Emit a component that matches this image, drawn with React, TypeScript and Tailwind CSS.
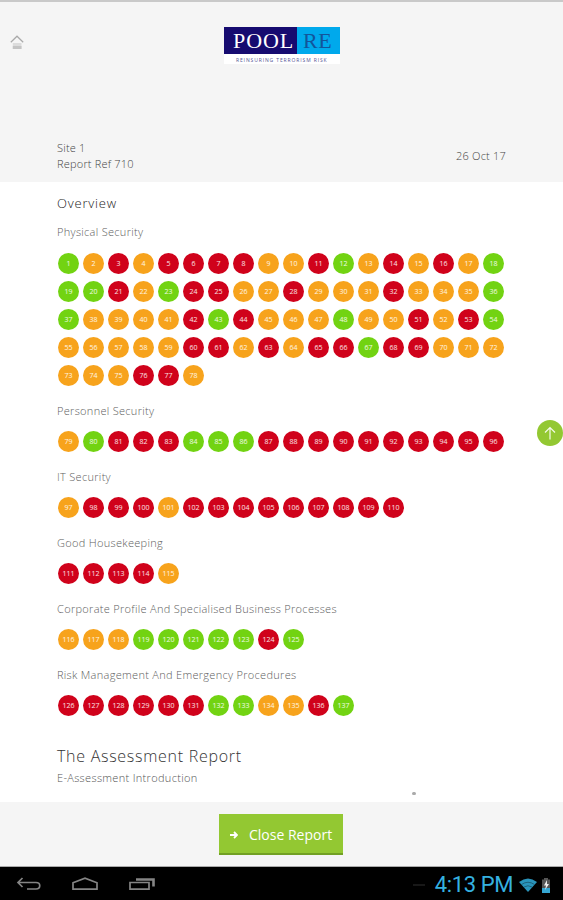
import React from "react";

type Section = { title: string; start: number; ratings: string };

const sections: Section[] = [
  {
    title: "Physical Security",
    start: 1,
    ratings:
      "gororrrroorgororog" +
      "ggrogrroorooorooog" +
      "goooorgrooogoororg" +
      "ooooorrororrgrrooo" +
      "ooorro",
  },
  { title: "Personnel Security", start: 79, ratings: "ogrrrgggrrrrrrrrrr" },
  { title: "IT Security", start: 97, ratings: "orrrorrrrrrrrr" },
  { title: "Good Housekeeping", start: 111, ratings: "rrrro" },
  { title: "Corporate Profile And Specialised Business Processes", start: 116, ratings: "ooogggggrg" },
  { title: "Risk Management And Emergency Procedures", start: 126, ratings: "rrrrrrggoorg" },
];

const colours: Record<string, string> = {
  g: "bg-[#72d312]",
  o: "bg-[#f7a31c]",
  r: "bg-[#d0021b]",
};

function Ratings({ section }: { section: Section }) {
  return (
    <section className="mb-[14.8px]">
      <h3 className="h-5 whitespace-nowrap text-[11px] leading-5 tracking-[0.3px] text-[#606060]">{section.title}</h3>
      <div className="mt-[10.2px] grid grid-cols-[repeat(18,21px)] gap-x-[4px] gap-y-[7.1px] pl-px">
        {section.ratings.split("").map((r, i) => (
          <span
            key={i}
            className={`flex h-[21px] w-[21px] items-center justify-center rounded-full text-[7px] font-normal leading-none text-white/90 ${colours[r]}`}
          >
            {section.start + i}
          </span>
        ))}
      </div>
    </section>
  );
}

function Logo() {
  return (
    <div className="flex h-[37px] w-[116px] flex-col bg-white">
      <div className="flex h-7 font-['Liberation_Serif',serif] text-[22px] font-normal leading-[27px]">
        <span className="w-[73px] bg-[#160b70] pl-[9px] tracking-[0.9px] text-white">POOL</span>
        <span className="w-[43px] bg-[#00a9ec] pl-[6px] tracking-[0.5px] text-[#12559b]">RE</span>
      </div>
      <span className="whitespace-nowrap pl-3 text-[5px] font-normal leading-[12px] tracking-[0.88px] text-[#555596]">
        REINSURING TERRORISM RISK
      </span>
    </div>
  );
}

export default function App() {
  return (
    <div className="relative flex h-[900px] w-[563px] flex-col overflow-hidden bg-white font-['Open_Sans',sans-serif] font-light">
      <header className="flex h-[182px] shrink-0 flex-col justify-between border-t-2 border-[#c9c9c9] bg-[#f5f5f5]">
        <div className="grid grid-cols-[224px_116px_1fr] pt-[25px]">
          <svg className="ml-[10px] mt-[8px]" width="14" height="15" viewBox="0 0 14 15" fill="none">
            <path d="M.8 7.200 7 1.200l6.200 6" stroke="#aaa" strokeWidth="1.200" />
            <path d="M2.800 8h8.700v6H2.800z" fill="#dcdcdc" />
            <path d="M2.800 11h8.700v3H2.800z" fill="#c4c4c4" />
          </svg>
          <Logo />
        </div>
        <div className="flex items-center justify-between pb-[11px] pl-[57px] pr-[57px] text-[11px] leading-[15.5px] tracking-[0.2px] text-[#444]">
          <div>
            <p>Site 1</p>
            <p>Report Ref 710</p>
          </div>
          <p>26 Oct 17</p>
        </div>
      </header>

      <main className="h-[620px] shrink-0 overflow-hidden px-[57px] pt-[11.4px]">
        <h2 className="mb-[9px] h-5 text-[13px] leading-[21px] tracking-[0.8px] text-[#222]">Overview</h2>
        {sections.map((s) => (
          <Ratings key={s.start} section={s} />
        ))}
        <h2 className="mt-[28.4px] h-6 text-[16px] leading-6 tracking-[0.72px] text-[#333]">The Assessment Report</h2>
        <div className="h-5 text-[11px] leading-5 tracking-[0.32px] text-[#555]">E-Assessment Introduction</div>
        <div className="ml-[355px] mt-[4px] h-[3px] w-1 rounded-full bg-[#aaa]" />
      </main>

      <footer className="flex h-[65px] shrink-0 justify-center border-b border-[#aaa] bg-[#f5f5f5] pt-3">
        <button className="mr-px flex h-[41px] w-[124px] items-center border-b-2 border-[#72a024] bg-[#93c832] pl-[11px] pt-[2px] text-[14px] font-normal text-white">
          <svg className="mr-[11px]" width="8" height="8" viewBox="0 0 8 8" fill="none" stroke="#fff" strokeWidth="1.8">
            <path d="M0 4h7M4 1l3 3-3 3" />
          </svg>
          <span className="whitespace-nowrap">Close Report</span>
        </button>
      </footer>

      <nav className="flex h-[33px] shrink-0 items-center justify-between bg-black pl-[16px] pr-[12px]">
        <svg className="mt-[3px]" width="140" height="20" viewBox="0 0 140 20" fill="none" stroke="#858585" strokeWidth="1.7">
          <path d="M6.500 3 2 7.500 6.500 12M2.500 7.500H20c5 0 5 6.500 0 6.500h-9" />
          <path d="M57 7.800 69 3.200l12 4.600v6.400H57z" />
          <path d="M114 7.500h19v6.700h-19z" />
          <path d="M120 4.500h17.500v7" strokeWidth="2.600" />
        </svg>
        <div className="flex items-center pt-[3px] text-[#35b1e0]">
          <span className="mr-[10px] h-[2px] w-3 bg-[#181818]" />
          <span className="mr-[6px] whitespace-nowrap font-['Roboto',sans-serif] text-[22px] font-normal leading-[30px] tracking-[-0.4px]">4:13 PM</span>
          <svg className="mr-1" width="18" height="14" viewBox="0 0 18 14" fill="#2a94bb">
            <path d="M0 4Q9-3 18 4L9 14Z" />
            <path d="M2.500 6.500q6.500-4.500 13 0M5 9q4-2.500 8 0" stroke="#123f50" strokeWidth=".6" fill="none" />
          </svg>
          <svg width="10" height="15" viewBox="0 0 10 15">
            <path d="M3 0h4v1.500h2V15H1V1.500h2z" fill="#555" />
            <path d="M1 10h8v5H1z" fill="#35a6d2" />
            <path d="M6 2 3 7.500h2L4 12l4-6H6z" fill="#eee" />
          </svg>
        </div>
      </nav>

      <button className="absolute left-[537px] top-[420px] flex h-[26px] w-[26px] items-center justify-center rounded-full bg-[#93c832]">
        <svg width="14" height="14" viewBox="0 0 14 14" fill="none" stroke="#f4fbe8" strokeWidth="1.200">
          <path d="M7 13.500V1.500M2 6.500l5-5 5 5" />
        </svg>
      </button>
    </div>
  );
}
